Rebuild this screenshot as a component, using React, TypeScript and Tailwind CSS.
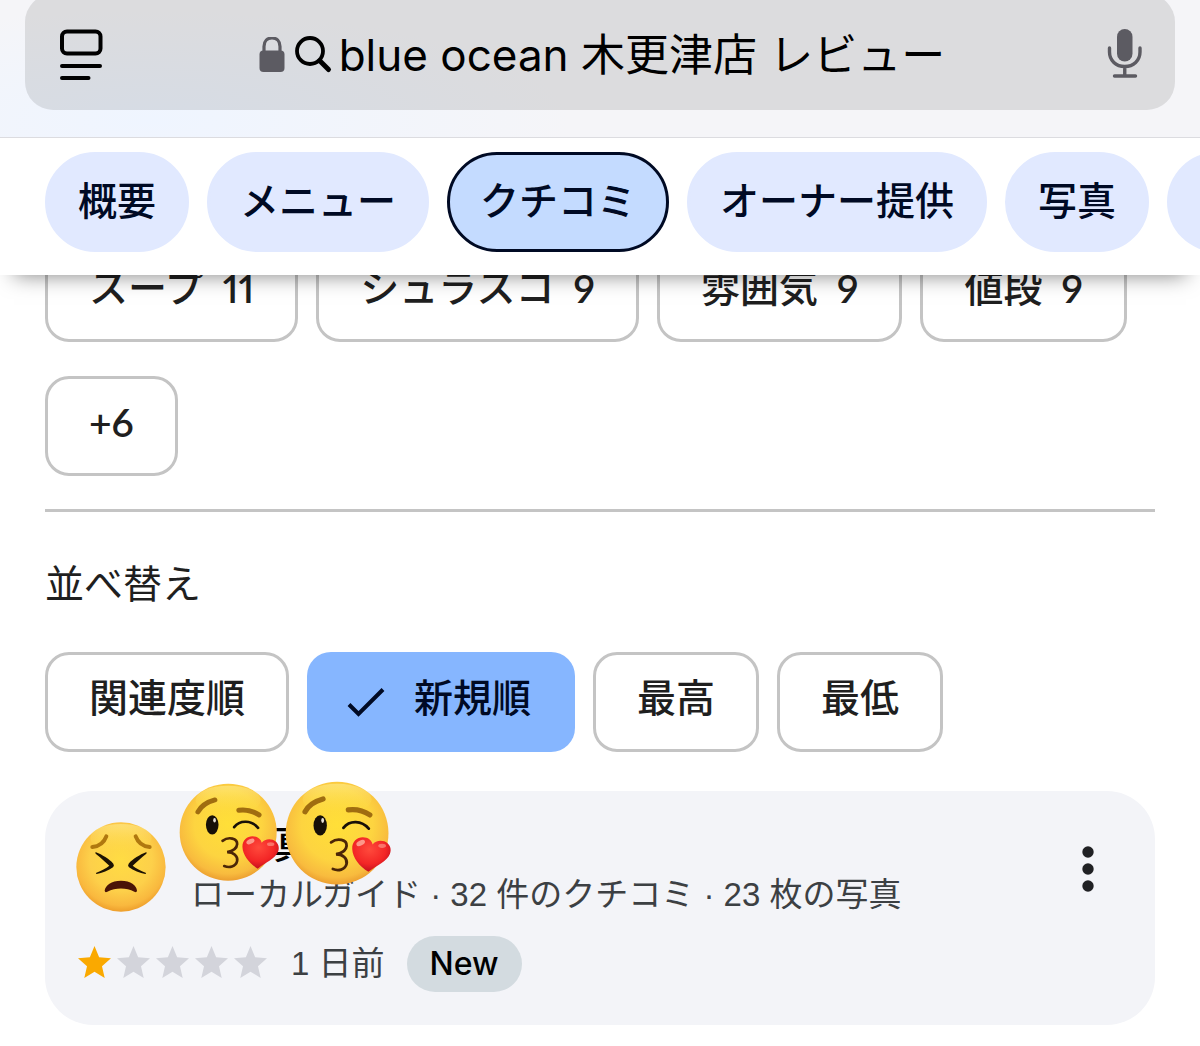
import React, { useState } from "react";

const tabs = ["概要", "メニュー", "クチコミ", "オーナー提供", "写真"];

const topics = [
  { label: "スープ", count: 11 },
  { label: "シュラスコ", count: 9 },
  { label: "雰囲気", count: 9 },
  { label: "値段", count: 9 },
];

const sortOptions = ["関連度順", "新規順", "最高", "最低"];

function ReaderIcon() {
  return (
    <svg viewBox="0 0 44 52" className="h-[52px] w-11" fill="none" stroke="#000" strokeWidth="4" strokeLinecap="round" aria-hidden="true">
      <rect x="3" y="2.500" width="38.500" height="22" rx="5" />
      <path d="M3 37H41M3 49H29.500" strokeWidth="4" />
    </svg>
  );
}

function LockIcon() {
  return (
    <svg viewBox="0 0 26 37" className="h-[37px] w-[26px] shrink-0" aria-hidden="true">
      <path d="M5 16V9.500C5 4 8.500 1 13 1s8 3 8 8.500V16" fill="none" stroke="#5c5b62" strokeWidth="3.200" />
      <rect x="0.500" y="13.500" width="25" height="21.500" rx="4" fill="#5c5b62" />
    </svg>
  );
}

function SearchIcon() {
  return (
    <svg viewBox="0 0 38 38" className="h-[38px] w-[38px] shrink-0" fill="none" stroke="#000" aria-hidden="true">
      <circle cx="15" cy="15" r="13" strokeWidth="3.800" />
      <path d="M25 25L33.500 33.500" strokeWidth="5" strokeLinecap="round" />
    </svg>
  );
}

function MicIcon() {
  return (
    <svg viewBox="0 0 36 52" className="h-[52px] w-9" aria-hidden="true">
      <rect x="10" y="0" width="15.500" height="32.500" rx="7.750" fill="#5c5b62" />
      <path d="M2.500 19v4C2.500 31.500 9 37.500 17.750 37.500s15.250-6 15.250-14.500v-4M17.750 37.500v9M7.500 47h21" fill="none" stroke="#5c5b62" strokeWidth="3.400" strokeLinecap="round" />
    </svg>
  );
}

function CheckIcon() {
  return (
    <svg viewBox="0 0 44 44" className="h-11 w-11" fill="none" stroke="#000a24" strokeWidth="4" aria-hidden="true">
      <path d="M5 24.500L14.500 34L39 9.500" />
    </svg>
  );
}

function Star({ filled }: { filled: boolean }) {
  return (
    <svg viewBox="2 2 20 19" preserveAspectRatio="none" className={filled ? "h-8 w-[33px] text-[#faa900]" : "h-8 w-[33px] text-[#d3d4db]"} fill="currentColor" aria-hidden="true">
      <path d="M12 17.270L18.180 21l-1.640-7.030L22 9.240l-7.190-.610L12 2 9.190 8.630 2 9.240l5.460 4.730L5.820 21z" />
    </svg>
  );
}

function PerseveringFace() {
  return (
    <svg viewBox="0 0 270 270" className="h-[90px] w-[90px] shrink-0" role="img" aria-label="投稿者">
      <defs>
        <radialGradient id="face-p" cx="0.5" cy="0.42" r="0.58">
          <stop offset="0" stopColor="#ffdc43" />
          <stop offset="0.6" stopColor="#fdd04a" />
          <stop offset="0.88" stopColor="#f9b83e" />
          <stop offset="1" stopColor="#ee9f2c" />
        </radialGradient>
        <linearGradient id="shine-p" x1="0" y1="0" x2="0" y2="1">
          <stop offset="0" stopColor="#fff3a0" stopOpacity="0.5" />
          <stop offset="1" stopColor="#ffdc43" stopOpacity="0" />
        </linearGradient>
      </defs>
      <circle cx="135" cy="135" r="134" fill="url(#face-p)" />
      <ellipse cx="135" cy="48" rx="92" ry="42" fill="url(#shine-p)" />
      <g fill="none" stroke="#b0780f" strokeWidth="12" strokeLinecap="round">
        <path d="M49 75C68 73 84 62 91 43" />
        <path d="M179 43C186 62 202 73 221 75" />
      </g>
      <g fill="#1c1203">
        <path d="M60 91C78 98 100 111 112 125Q116 131 111 136C98 146 78 153 62 156Q58 154 61 152C76 146 90 139 100 131C89 120 74 107 59 95Q56 91 60 91Z" />
        <path d="M210 91C192 98 170 111 158 125Q154 131 159 136C172 146 192 153 208 156Q212 154 209 152C194 146 180 139 170 131C181 120 196 107 211 95Q214 91 210 91Z" />
        <path d="M86 206C88 190 106 176 135 176S182 190 183 206Q182 213 175 209C151 196 119 196 94 209Q87 213 86 206Z" fill="#4a1407" />
      </g>
    </svg>
  );
}

function KissFace({ id, className }: { id: string; className: string }) {
  const face = `face-${id}`;
  const heart = `heart-${id}`;
  const shine = `shine-${id}`;
  return (
    <svg viewBox="0 0 304 298" className={className} aria-hidden="true">
      <defs>
        <radialGradient id={face} cx="0.5" cy="0.42" r="0.58">
          <stop offset="0" stopColor="#ffdf38" />
          <stop offset="0.6" stopColor="#fdd440" />
          <stop offset="0.88" stopColor="#f8bb3e" />
          <stop offset="1" stopColor="#ec9f30" />
        </radialGradient>
        <radialGradient id={heart} cx="0.45" cy="0.35" r="0.65">
          <stop offset="0" stopColor="#ff4a3c" />
          <stop offset="0.65" stopColor="#f32626" />
          <stop offset="1" stopColor="#c40f1e" />
        </radialGradient>
        <linearGradient id={shine} x1="0" y1="0" x2="0" y2="1">
          <stop offset="0" stopColor="#fff3a0" stopOpacity="0.5" />
          <stop offset="1" stopColor="#ffdf38" stopOpacity="0" />
        </linearGradient>
      </defs>
      <circle cx="148" cy="148" r="146" fill={`url(#${face})`} />
      <ellipse cx="148" cy="52" rx="98" ry="44" fill={`url(#${shine})`} />
      <g fill="none" stroke="#a06d10" strokeWidth="15" strokeLinecap="round">
        <path d="M57 87C66 70 86 57 108 51" />
        <path d="M180 82C202 79 224 85 241 96" />
      </g>
      <ellipse cx="100" cy="126" rx="19" ry="29" fill="#171008" />
      <ellipse cx="107" cy="112" rx="4" ry="7" fill="#e8e2d8" />
      <path d="M166 133C184 110 218 112 238 135" fill="none" stroke="#171008" strokeWidth="8" strokeLinecap="round" />
      <path
        d="M131 174C150 160 176 167 175 184C174 199 161 205 145 208C164 208 178 220 175 235C171 253 151 256 136 250"
        fill="none"
        stroke="#4b2607"
        strokeWidth="8"
        strokeLinecap="round"
      />
      <path
        d="M237 258C212 243 192 218 191 193C190 172 205 160 221 160C236 160 246 168 249 180C256 170 270 167 282 171C298 177 304 193 298 207C289 229 262 238 237 258Z"
        fill={`url(#${heart})`}
      />
      <ellipse cx="215" cy="176" rx="13" ry="7" fill="#ffb9a8" opacity="0.75" transform="rotate(-25 215 176)" />
      <ellipse cx="276" cy="184" rx="11" ry="6" fill="#ffb9a8" opacity="0.5" />
    </svg>
  );
}

export default function App() {
  const [query, setQuery] = useState("blue ocean 木更津店 レビュー");
  const [tab, setTab] = useState("クチコミ");
  const [sort, setSort] = useState("新規順");

  return (
    <div className="overflow-hidden bg-white pb-5 font-[Inter,'Noto_Sans_CJK_JP',sans-serif] text-[#1f1f1f]">
      <div className="relative z-10 bg-white shadow-[0_14px_20px_-14px_rgba(0,0,0,0.5)]">
        <header className="overflow-hidden border-b border-[#dcdce0] bg-[radial-gradient(ellipse_420px_110px_at_150px_120px,#eff5ff,#f5f5f8)] px-[25px] pb-[27px]">
          <div className="-mt-1.5 flex h-[116px] items-center justify-between rounded-[28px] bg-black/10 pt-1.5 pr-8 pl-[34px]">
            <button type="button" aria-label="ページメニュー">
              <ReaderIcon />
            </button>
            <div className="mr-1.5 flex items-center">
              <LockIcon />
              <label htmlFor="address" className="ml-2.5" aria-label="検索">
                <SearchIcon />
              </label>
              <input
                id="address"
                type="text"
                value={query}
                onChange={(e) => setQuery(e.target.value)}
                className="field-sizing-content ml-1.5 h-16 bg-transparent text-[44px] text-black outline-none"
              />
            </div>
            <button type="button" aria-label="音声入力">
              <MicIcon />
            </button>
          </div>
        </header>
        <nav aria-label="店舗情報" className="flex gap-[18px] overflow-hidden pt-3.5 pb-[23px] pl-[45px]">
          {tabs.map((t) => (
            <button
              key={t}
              type="button"
              aria-pressed={t === tab}
              onClick={() => setTab(t)}
              className={
                t === tab
                  ? "h-[100px] shrink-0 rounded-full border-[3px] border-[#000a24] bg-[#c4dbff] px-[30px] pb-0.5 text-[39px] leading-[48px] font-medium text-[#000a24]"
                  : "h-[100px] shrink-0 rounded-full border-[3px] border-[#e1e9ff] bg-[#e1e9ff] px-[30px] pb-0.5 text-[39px] leading-[48px] font-medium text-[#000a24]"
              }
            >
              {t}
            </button>
          ))}
          <button type="button" aria-label="詳細" className="h-[100px] w-36 shrink-0 rounded-full bg-[#e1e9ff]" />
        </nav>
      </div>

      <main className="-mt-[33px] px-[45px]">
        <div className="flex flex-wrap gap-x-[18px] gap-y-[34px]">
          {topics.map((t) => (
            <button
              key={t.label}
              type="button"
              className="flex h-[100px] items-center gap-[19px] rounded-3xl border-[3px] border-[#c4c4c4] px-[41px] pb-2 text-[39px] leading-[48px] font-medium"
            >
              <span>{t.label}</span>
              <span className="font-[Lato,sans-serif] font-semibold proportional-nums">{t.count}</span>
            </button>
          ))}
          <button
            type="button"
            className="h-[100px] rounded-3xl border-[3px] border-[#c4c4c4] px-[41px] pb-2 font-[Lato,sans-serif] text-[39px] leading-[48px] font-semibold proportional-nums"
          >
            +6
          </button>
        </div>

        <hr className="mt-[33px] border-t-[3px] border-[#c4c4c4]" />

        <h2 className="mt-12 text-[39px] leading-[48px]">並べ替え</h2>
        <div className="mt-11 flex flex-wrap gap-[18px]">
          {sortOptions.map((s) =>
            s === sort ? (
              <button
                key={s}
                type="button"
                aria-pressed="true"
                className="flex h-[100px] items-center gap-[26px] rounded-3xl bg-[#86b6ff] pr-11 pl-[37px] text-[39px] leading-[48px] font-medium text-[#000a24]"
              >
                <CheckIcon />
                <span className="pb-2">{s}</span>
              </button>
            ) : (
              <button
                key={s}
                type="button"
                aria-pressed="false"
                onClick={() => setSort(s)}
                className="h-[100px] rounded-3xl border-[3px] border-[#c4c4c4] px-[41px] pb-2 text-[39px] leading-[48px] font-medium"
              >
                {s}
              </button>
            ),
          )}
        </div>

        <article className="relative mt-[39px] rounded-[48px] bg-[#f3f4f8] px-[31px] pt-[31px] pb-[33px]">
          <div className="flex items-start">
            <PerseveringFace />
            <div className="ml-[25px] flex-1 font-['Liberation_Sans','Noto_Sans_CJK_JP',sans-serif]">
              <h3 className="pl-[82px] text-[39px] leading-[46px] font-medium text-black">真</h3>
              <p className="mt-1 text-[33px] leading-[46px] text-[#3c4043]">ローカルガイド · 32 件のクチコミ · 23 枚の写真</p>
            </div>
            <button type="button" aria-label="その他の操作" className="mt-6 mr-[30px]">
              <svg viewBox="0 0 12 46" className="h-[46px] w-3" fill="#202124" aria-hidden="true">
                <circle cx="6" cy="6" r="5.700" />
                <circle cx="6" cy="23" r="5.700" />
                <circle cx="6" cy="40" r="5.700" />
              </svg>
            </button>
          </div>
          <div className="mt-[18px] flex items-center">
            <div role="img" aria-label="5 つ星のうち 1" className="mb-1 ml-0.5 flex gap-1.5">
              {[1, 2, 3, 4, 5].map((n) => (
                <Star key={n} filled={n <= 1} />
              ))}
            </div>
            <span className="ml-6 font-['Liberation_Sans','Noto_Sans_CJK_JP',sans-serif] text-[33px] leading-[46px] text-[#3c4043]">1 日前</span>
            <span className="ml-[22px] rounded-full bg-[#d3dbe0] px-[23px] text-[32px] leading-[56px] font-medium text-black">New</span>
          </div>
          <KissFace id="a" className="absolute -top-2 left-[134px] h-[99px] w-[101px]" />
          <KissFace id="b" className="absolute -top-2.5 left-[240px] h-[105px] w-[107px]" />
        </article>
      </main>
    </div>
  );
}
